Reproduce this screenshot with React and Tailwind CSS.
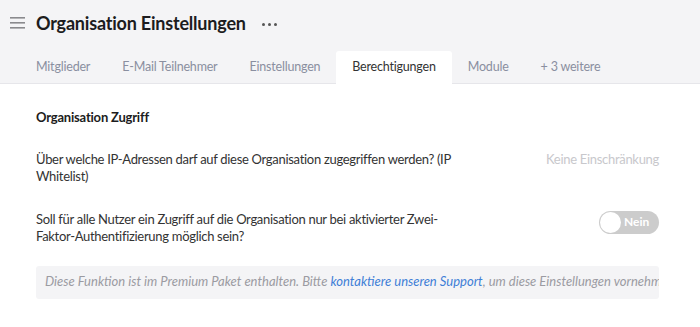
import { useState } from "react";

const tabs = ["Mitglieder", "E-Mail Teilnehmer", "Einstellungen", "Berechtigungen", "Module", "+ 3 weitere"];

function App() {
    const [active, setActive] = useState("Berechtigungen");
    const [twoFactor, setTwoFactor] = useState(false);

    return (
        <div className="min-h-screen bg-white text-[#222] font-['Lato',sans-serif]">
            {/* Header */}
            <div className="bg-[#f4f4f6] border-b border-[#e6e6ea]">
                <div className="flex items-center h-[46px] pl-[10px]">
                    <svg width="16" height="14" viewBox="0 0 16 14" className="mr-[10px]">
                        <rect x="0" y="1" width="15" height="1.6" fill="#8a8a8e" />
                        <rect x="0" y="6" width="15" height="1.6" fill="#8a8a8e" />
                        <rect x="0" y="11" width="15" height="1.6" fill="#8a8a8e" />
                    </svg>
                    <h1 className="text-[18px] font-bold text-[#1c1c20] tracking-[-0.2px]">Organisation Einstellungen</h1>
                    <button className="ml-[16px] flex gap-[3px] items-center pt-[2px]">
                        <span className="w-[3px] h-[3px] rounded-full bg-[#555]" />
                        <span className="w-[3px] h-[3px] rounded-full bg-[#555]" />
                        <span className="w-[3px] h-[3px] rounded-full bg-[#555]" />
                    </button>
                </div>
                <div className="flex pl-[20px] h-[32px] mt-[5px]">
                    {tabs.map((tab) => (
                        <button
                            key={tab}
                            onClick={() => setActive(tab)}
                            className={
                                "px-[16px] text-[12.5px] tracking-[-0.2px] rounded-t-[3px] mb-[-1px] " +
                                (active === tab ? "bg-white text-[#333]" : "text-[#8a8fa0]")
                            }
                        >
                            {tab}
                        </button>
                    ))}
                </div>
            </div>

            {/* Content */}
            <div className="pl-[36px] pr-[41px]">
                <h2 className="text-[13px] font-bold mt-[24px] text-[#1c1c20] tracking-[-0.2px]">Organisation Zugriff</h2>

                <div className="flex justify-between mt-[23px]">
                    <p className="text-[13px] leading-[17px] tracking-[-0.3px] w-[418px] text-[#333]">
                        Über welche IP-Adressen darf auf diese Organisation zugegriffen werden? (IP Whitelist)
                    </p>
                    <span className="text-[13px] leading-[17px] tracking-[-0.3px] text-[#c8c8cc]">Keine Einschränkung</span>
                </div>

                <div className="flex justify-between items-start mt-[26px]">
                    <p className="text-[13px] leading-[17px] tracking-[-0.3px] w-[418px] text-[#333]">
                        Soll für alle Nutzer ein Zugriff auf die Organisation nur bei aktivierter Zwei-Faktor-Authentifizierung möglich sein?
                    </p>
                    <button
                        onClick={() => setTwoFactor(!twoFactor)}
                        className="relative w-[60px] h-[23px] rounded-full bg-[#cccccc] flex items-center"
                    >
                        <span className="absolute left-[1px] top-[1px] w-[21px] h-[21px] rounded-full bg-white" />
                        <span className="ml-[25px] text-[12px] font-bold text-white">Nein</span>
                    </button>
                </div>

                <div className="mt-[21px] bg-[#f4f4f6] rounded-[3px] h-[33px] flex items-center pl-[9px] overflow-hidden">
                    <p className="text-[13px] italic text-[#9b9ba2] whitespace-nowrap">
                        Diese Funktion ist im Premium Paket enthalten. Bitte{" "}
                        <a href="#" className="text-[#3f7fd6]">kontaktiere unseren Support</a>, um diese Einstellungen vornehmen zu können.
                    </p>
                </div>
            </div>
        </div>
    );
}

export default App;
